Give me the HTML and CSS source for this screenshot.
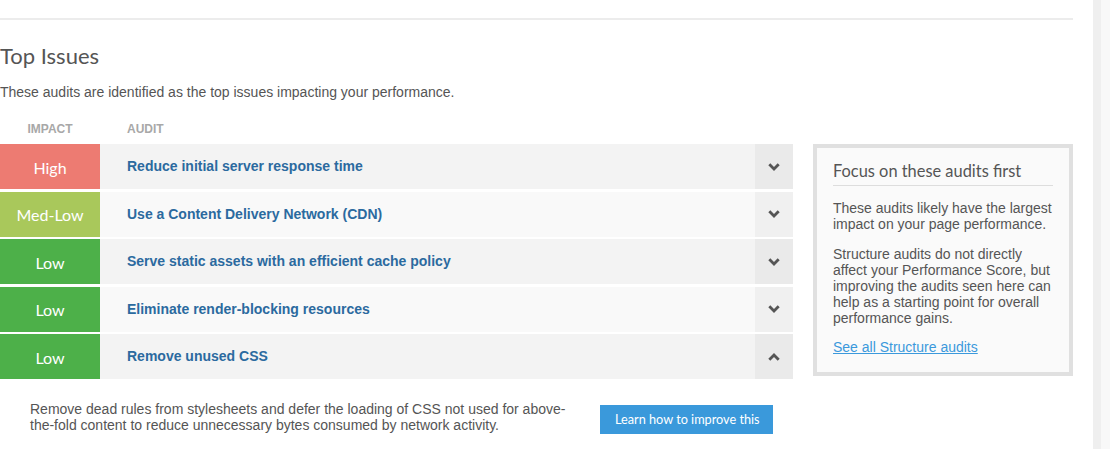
FILE: index.html
```html
<!DOCTYPE html>
<html lang="en">
<head>
<meta charset="utf-8">
<title>Top Issues</title>
<link rel="stylesheet" href="styles.css">
</head>
<body>
<div class="shell">
  <div class="page">
    <div class="topline"></div>
    <h2 class="title">Top Issues</h2>
    <p class="intro">These audits are identified as the top issues impacting your performance.</p>
    <div class="grid">
      <div class="thead">
        <span class="th th-impact">IMPACT</span>
        <span class="th th-audit">AUDIT</span>
      </div>
      <div class="list">
        <div class="row">
          <div class="impact high">High</div>
          <div class="audit">Reduce initial server response time</div>
          <div class="toggle"><svg class="chev" viewBox="0 0 12 8" width="12" height="8"><path d="M1.3 1.3 L6 6 L10.7 1.3" fill="none" stroke="#555" stroke-width="2.8"/></svg></div>
        </div>
        <div class="row alt">
          <div class="impact medlow">Med-Low</div>
          <div class="audit">Use a Content Delivery Network (CDN)</div>
          <div class="toggle"><svg class="chev" viewBox="0 0 12 8" width="12" height="8"><path d="M1.3 1.3 L6 6 L10.7 1.3" fill="none" stroke="#555" stroke-width="2.8"/></svg></div>
        </div>
        <div class="row">
          <div class="impact low">Low</div>
          <div class="audit">Serve static assets with an efficient cache policy</div>
          <div class="toggle"><svg class="chev" viewBox="0 0 12 8" width="12" height="8"><path d="M1.3 1.3 L6 6 L10.7 1.3" fill="none" stroke="#555" stroke-width="2.8"/></svg></div>
        </div>
        <div class="row alt">
          <div class="impact low">Low</div>
          <div class="audit">Eliminate render-blocking resources</div>
          <div class="toggle"><svg class="chev" viewBox="0 0 12 8" width="12" height="8"><path d="M1.3 1.3 L6 6 L10.7 1.3" fill="none" stroke="#555" stroke-width="2.8"/></svg></div>
        </div>
        <div class="row">
          <div class="impact low">Low</div>
          <div class="audit">Remove unused CSS</div>
          <div class="toggle"><svg class="chev" viewBox="0 0 12 8" width="12" height="8"><path d="M1.3 6.7 L6 2 L10.7 6.7" fill="none" stroke="#555" stroke-width="2.8"/></svg></div>
        </div>
        <div class="details">
          <p class="desc">Remove dead rules from stylesheets and defer the loading of CSS not used for above-the-fold content to reduce unnecessary bytes consumed by network activity.</p>
          <a class="btn" href="#">Learn how to improve this</a>
        </div>
      </div>
      <aside class="panel">
        <h3 class="panel-title">Focus on these audits first</h3>
        <p class="panel-text">These audits likely have the largest impact on your page performance.</p>
        <p class="panel-text">Structure audits do not directly affect your Performance Score, but improving the audits seen here can help as a starting point for overall performance gains.</p>
        <a class="panel-link" href="#">See all Structure audits</a>
      </aside>
    </div>
  </div>
  <div class="gutter"></div>
  <div class="rail"></div>
  <div class="rail-edge"></div>
</div>
</body>
</html>
```

FILE: styles.css
```css
html, body {
  margin: 0;
  padding: 0;
  background: #fff;
}
body {
  font-family: "Liberation Sans", Arial, sans-serif;
  color: #555;
  font-size: 14px;
}
.shell {
  display: flex;
  height: 449px;
  overflow: hidden;
}
.page {
  width: 1073px;
  flex: none;
}
.gutter {
  width: 20px;
  flex: none;
}
.rail {
  width: 8px;
  flex: none;
  background: #efefef;
}
.rail-edge {
  flex: 1;
  background: #f8f8f8;
}
.topline {
  height: 2px;
  background: #ececec;
  margin-top: 18px;
}
.title {
  font-family: Lato, "Open Sans", sans-serif;
  font-weight: 400;
  font-size: 22px;
  line-height: 28px;
  color: #555;
  margin: 22px 0 0;
}
.intro {
  margin: 14px 0 0;
  line-height: 16px;
  font-size: 14px;
}
.grid {
  display: grid;
  grid-template-columns: 793px 260px;
  column-gap: 20px;
  margin-top: 22px;
}
.thead {
  grid-column: 1 / 3;
  display: flex;
  font-size: 12px;
  font-weight: 700;
  line-height: 14px;
  color: #a8a8a8;
  height: 22px;
}
.th-impact {
  width: 100px;
  text-align: center;
}
.th-audit {
  padding-left: 27px;
}
.list {
  display: flex;
  flex-direction: column;
  gap: 2.5px;
}
.row {
  display: flex;
  height: 45px;
  background: #f3f3f3;
}
.row.alt {
  background: #f9f9f9;
}
.impact {
  width: 100px;
  flex: none;
  display: flex;
  align-items: center;
  justify-content: center;
  color: #fff;
  font-family: Lato, "Open Sans", sans-serif;
  font-size: 16px;
  padding-top: 1px;
  box-sizing: border-box;
}
.high { background: #ed7b72; }
.medlow { background: #a9c85b; }
.low { background: #4db049; }
.audit {
  flex: 1;
  display: flex;
  align-items: center;
  padding-left: 27px;
  padding-bottom: 1px;
  font-weight: 700;
  font-size: 14px;
  color: #2b6a9f;
}
.toggle {
  width: 38px;
  flex: none;
  display: flex;
  align-items: center;
  justify-content: center;
  background: rgba(0, 0, 0, 0.035);
}
.chev {
  display: block;
}
.details {
  display: flex;
  align-items: flex-start;
  padding: 19px 0 0 30px;
}
.desc {
  width: 545px;
  margin: 0;
  line-height: 16px;
  font-size: 14px;
  color: #555;
}
.btn {
  margin: 4px 0 0 25px;
  width: 173px;
  height: 29px;
  box-sizing: border-box;
  padding-left: 15px;
  display: flex;
  align-items: center;
  background: #3a99db;
  color: #fff;
  text-decoration: none;
  font-family: Lato, "Open Sans", sans-serif;
  font-size: 12.7px;
}
.panel {
  grid-column: 2;
  align-self: start;
  border: 4px solid #e0e0e0;
  background: #fafafa;
  padding: 12px 16px 17px;
  height: 232px;
  box-sizing: border-box;
}
.panel-title {
  margin: 0;
  font-family: Lato, "Open Sans", sans-serif;
  font-weight: 400;
  font-size: 16.4px;
  line-height: 22px;
  color: #555;
  padding-bottom: 3px;
  border-bottom: 1px solid #ddd;
}
.panel-text {
  margin: 14px 0 0;
  line-height: 16px;
  font-size: 14px;
  color: #555;
}
.panel-link {
  display: inline-block;
  margin-top: 13px;
  line-height: 16px;
  font-size: 14px;
  color: #3b99dc;
  text-decoration: underline;
}
```
